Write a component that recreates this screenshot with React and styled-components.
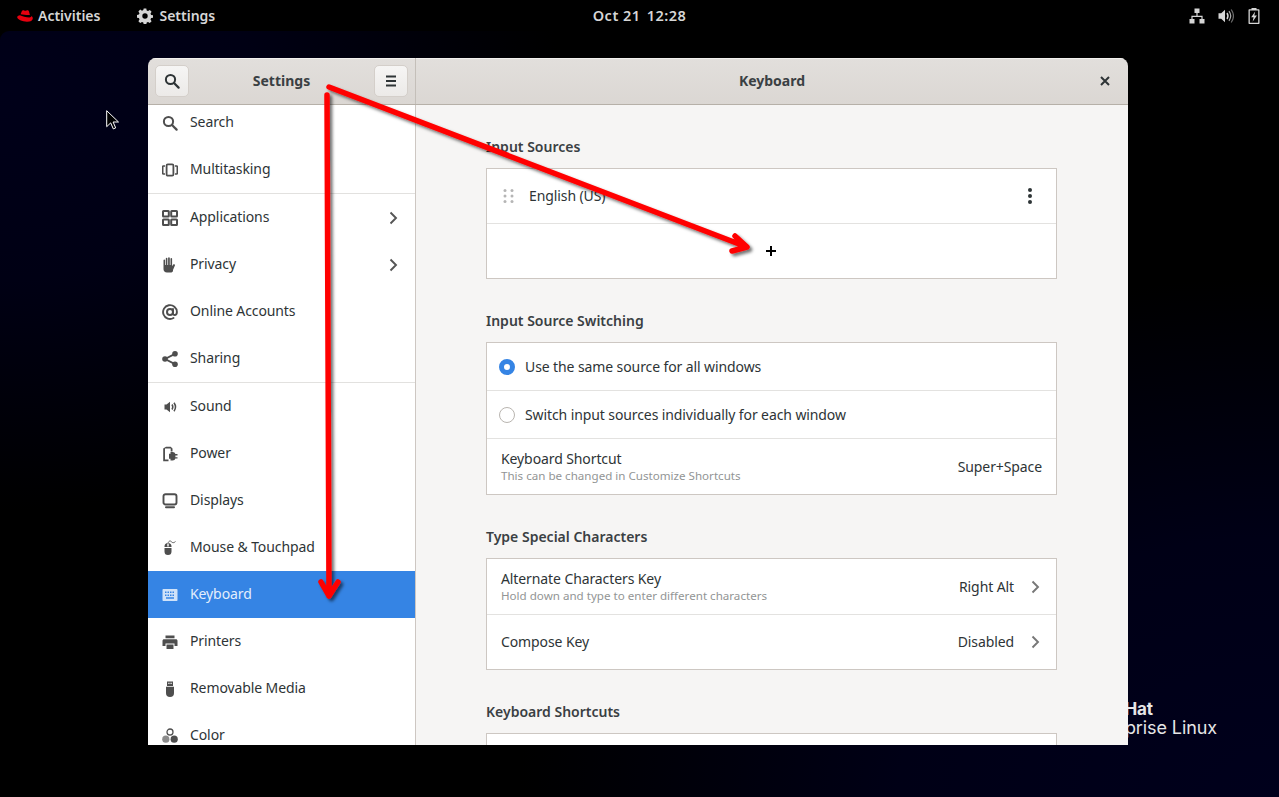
import React from 'react';
import styled, { createGlobalStyle } from 'styled-components';

const GlobalStyle = createGlobalStyle`
  html, body {
    margin: 0;
    padding: 0;
    background: #000;
    overflow: hidden;
  }
  * { box-sizing: border-box; }
`;

const Ink = ({ children, size = 16, vb = '0 0 16 16' }) => (
  <svg width={size} height={size} viewBox={vb} fill="currentColor" style={{ display: 'block' }}>
    {children}
  </svg>
);

const icons = {
  search: (
    <Ink>
      <circle cx="6.5" cy="6.5" r="4.6" fill="none" stroke="currentColor" strokeWidth="2" />
      <path d="M10 10l4.6 4.6" fill="none" stroke="currentColor" strokeWidth="2.2" strokeLinecap="round" />
    </Ink>
  ),
  multitasking: (
    <Ink>
      <rect x="4.6" y="2.4" width="6.8" height="11.2" rx="1.2" fill="none" stroke="currentColor" strokeWidth="1.8" />
      <path d="M3 4H1.300C.9 4 .7 4.300.7 4.600v6.800c0 .3.2.6.6.6H3M13 4h1.700c.4 0 .6.3.6.6v6.800c0 .3-.2.6-.6.6H13" fill="none" stroke="currentColor" strokeWidth="1.600" />
    </Ink>
  ),
  applications: (
    <Ink>
      <rect x="1" y="1" width="5.8" height="5.4" rx=".5" fill="none" stroke="currentColor" strokeWidth="2" />
      <rect x="9.2" y="1" width="5.8" height="5.4" rx=".5" fill="none" stroke="currentColor" strokeWidth="2" />
      <rect x="1" y="9.600" width="5.8" height="5.4" rx=".5" fill="none" stroke="currentColor" strokeWidth="2" />
      <rect x="9.2" y="9.600" width="5.8" height="5.4" rx=".5" fill="none" stroke="currentColor" strokeWidth="2" />
    </Ink>
  ),
  privacy: (
    <Ink>
      <path d="M1.500 3.200c0-1 1.600-1 1.600 0V8h.7V1.500c0-1 1.600-1 1.600 0V8h.7V.9c0-1 1.700-1 1.700 0V8h.7V1.700c0-1 1.600-1 1.600 0v7.500l1.100-1.600c.8-1 2.300-.2 1.700.8l-1.900 4.700C11.200 14.800 10 15.500 8.500 15.500H5c-2.200 0-3.500-1.300-3.500-3.200z" />
    </Ink>
  ),
  at: (
    <Ink>
      <circle cx="8" cy="8" r="3" fill="none" stroke="currentColor" strokeWidth="2" />
      <path d="M11 5v4.500c0 2.200 3.900 2.200 3.900-1.500A6.900 6.900 0 1 0 11.500 14" fill="none" stroke="currentColor" strokeWidth="1.900" strokeLinecap="round" />
    </Ink>
  ),
  sharing: (
    <Ink>
      <circle cx="3" cy="8" r="2.800" />
      <circle cx="13" cy="2.800" r="2.800" />
      <circle cx="13" cy="13.200" r="2.800" />
      <path d="M3 8l10-5.200M3 8l10 5.200" fill="none" stroke="currentColor" strokeWidth="1.900" />
    </Ink>
  ),
  sound: (
    <Ink>
      <path d="M2.500 5.500h2L8 2.700v10.600l-3.500-2.800h-2z" />
      <path d="M10 5.500c1 1.500 1 3.500 0 5M12 3.800c1.800 2.500 1.800 5.900 0 8.400" fill="none" stroke="currentColor" strokeWidth="1.500" />
    </Ink>
  ),
  power: (
    <Ink>
      <path d="M4 .8h4.700L10.500 2.500v3H8.700V2.600H3V13.500h3.500v1.800H1.200V2.500z" />
      <path d="M8.500 6h2.200a2.800 2.800 0 0 1 2.700 2.100h2.100v1.300h-2.100v1.800h2.100v1.300h-2.100a2.800 2.800 0 0 1-2.700 2.100H8.500v-1.800H7V7.800h1.500z" />
    </Ink>
  ),
  displays: (
    <Ink>
      <rect x="1.500" y="1.200" width="13" height="10.300" rx="2" fill="none" stroke="currentColor" strokeWidth="1.900" />
      <path d="M4 14.300h8" stroke="currentColor" strokeWidth="2" strokeLinecap="round" />
    </Ink>
  ),
  mouse: (
    <Ink>
      <path d="M2.500 6.500A3.500 3.500 0 0 1 6 3a3.500 3.500 0 0 1 3.500 3.500V7h-7zM2.500 8h7v3.500a3.500 3.500 0 0 1-7 0z" />
      <rect x="5.300" y="3.500" width="1.400" height="3" fill="#fff" />
      <path d="M6 3c1-2.400 2.500-2.400 3.500-1.200s2.500 1.200 4-.3" fill="none" stroke="currentColor" strokeWidth=".9" />
    </Ink>
  ),
  keyboard: (
    <Ink>
      <path fillRule="evenodd" d="M1.300 2h13.400c.5 0 .8.300.8.800v10.400c0 .5-.3.800-.8.800H1.300c-.5 0-.8-.3-.8-.8V2.800c0-.5.300-.8.800-.8zM3 4.500V6h1.500V4.500zm2.500 0V6H7V4.500zM8 4.500V6h1.500V4.500zm2.500 0V6H12V4.500zM3 7.500V9h1.500V7.500zm2.500 0V9H7V7.500zm2.500 0V9h1.500V7.500zm2.500 0V9H12V7.500zM4 10.200v1.500h8v-1.500z" />
    </Ink>
  ),
  printers: (
    <Ink>
      <path d="M3.500 1.500h9v2.700h-9zM2 5.200h12c.8 0 1.500.7 1.500 1.500V12h-3V9.500h-9V12h-3V6.700c0-.8.700-1.500 1.500-1.500z" />
      <path d="M4.500 10.500h7V15h-7z" />
    </Ink>
  ),
  usb: (
    <Ink>
      <path fillRule="evenodd" d="M5 .5h6v4.500H5zM6.300 1.800v1.300h1.200V1.800zm2.200 0v1.300h1.200V1.800z" />
      <path d="M4 5.700h8V12a4 4 0 0 1-8 0z" />
    </Ink>
  ),
  color: (
    <Ink>
      <circle cx="8" cy="4" r="3" fill="none" stroke="currentColor" strokeWidth="1.300" />
      <circle cx="3.800" cy="11.200" r="3.600" opacity=".65" />
      <circle cx="12.200" cy="11.200" r="3.600" />
    </Ink>
  ),
  chevron: (
    <Ink>
      <path d="M5.500 2.500L11 8l-5.500 5.500" fill="none" stroke="currentColor" strokeWidth="1.900" />
    </Ink>
  ),
  menu: (
    <Ink>
      <path d="M3 3.500h10M3 8h10M3 12.500h10" stroke="currentColor" strokeWidth="1.900" />
    </Ink>
  ),
  close: (
    <Ink>
      <path d="M4 4l8 8M12 4l-8 8" stroke="currentColor" strokeWidth="2" />
    </Ink>
  ),
  dots: (
    <Ink>
      <circle cx="8" cy="2" r="2" />
      <circle cx="8" cy="8" r="2" />
      <circle cx="8" cy="14" r="2" />
    </Ink>
  ),
  grip: (
    <Ink>
      <circle cx="4" cy="2.500" r="1.500" />
      <circle cx="11" cy="2.500" r="1.500" />
      <circle cx="4" cy="8" r="1.500" />
      <circle cx="11" cy="8" r="1.500" />
      <circle cx="4" cy="13.500" r="1.500" />
      <circle cx="11" cy="13.500" r="1.500" />
    </Ink>
  ),
  plus: (
    <Ink>
      <path d="M8 3v10M3 8h10" stroke="currentColor" strokeWidth="2" />
    </Ink>
  ),
  gear: (
    <Ink>
      <path fillRule="evenodd" d="M6.700.5h2.600l.4 2 1.300.6 1.800-1.100 1.800 1.800-1.100 1.800.6 1.300 2 .4v2.400l-2 .4-.6 1.300 1.100 1.800-1.800 1.800-1.800-1.100-1.300.6-.4 2H6.700l-.4-2-1.300-.6-1.800 1.100-1.800-1.800 1.100-1.800-.6-1.300-2-.4V6.900l2-.4.6-1.300-1.100-1.800L3.200 1.600 5 2.700l1.300-.6zM8 5.300a2.700 2.700 0 1 0 0 5.400 2.700 2.700 0 0 0 0-5.400z" />
    </Ink>
  ),
  redhat: (
    <Ink vb="0 0 16 12">
      <path d="M3.600 4.300L4.800 1.200C5.200.3 6.200.100 7.200.500c.9.300 1.500.3 2.300 0 1.200-.4 2.200 0 2.500 1.100l.9 3.500C9.500 5.200 6 4.800 3.600 4.300z" />
      <path d="M3 5.300c-1.700.3-2.800 1-2.800 2 0 2 5 4.400 9.800 4.400 3.500 0 5.800-1.300 5.800-3.300 0-.9-.5-1.700-1.500-2.300.2.800-.5 1.300-2 1.300C9.300 7.400 5 6.500 3 5.300z" />
    </Ink>
  ),
  network: (
    <Ink>
      <path d="M5.500.5h5v4.500h-5zM.5 11h5v4.500h-5zM10.500 11h5v4.500h-5z" />
      <path d="M8 5v3M3 11V8.300h10V11" fill="none" stroke="currentColor" strokeWidth="1.200" />
    </Ink>
  ),
  volume: (
    <Ink>
      <path d="M.5 5.200h2.700L7 1.800v12.400l-3.800-3.400H.5z" />
      <path d="M9 5c1.200 1.800 1.200 4.200 0 6" fill="none" stroke="currentColor" strokeWidth="1.400" />
      <path d="M11 3.200c2 2.800 2 6.800 0 9.600" fill="none" stroke="currentColor" strokeWidth="1.200" opacity=".8" />
      <path d="M13.200 1.500c2.800 4 2.800 9 0 13" fill="none" stroke="currentColor" strokeWidth="1.200" opacity=".5" />
    </Ink>
  ),
  battery: (
    <Ink>
      <path fillRule="evenodd" d="M5.500 0h5v1.200h2.300c.4 0 .7.300.7.700v13.400c0 .4-.3.700-.7.700H3.200c-.4 0-.7-.3-.7-.7V1.900c0-.4.300-.7.700-.7h2.300zM3.800 2.500v12.200h8.400V2.500z" />
      <path d="M9.200 3.500L5.200 9.200h2.400L6.600 13.800 10.900 7.600H8.300z" />
    </Ink>
  ),
};

const sideItems = [
  { icon: 'search', label: 'Search' },
  { icon: 'multitasking', label: 'Multitasking', split: true },
  { icon: 'applications', label: 'Applications', more: true },
  { icon: 'privacy', label: 'Privacy', more: true },
  { icon: 'at', label: 'Online Accounts' },
  { icon: 'sharing', label: 'Sharing', split: true },
  { icon: 'sound', label: 'Sound' },
  { icon: 'power', label: 'Power' },
  { icon: 'displays', label: 'Displays' },
  { icon: 'mouse', label: 'Mouse & Touchpad' },
  { icon: 'keyboard', label: 'Keyboard', active: true },
  { icon: 'printers', label: 'Printers' },
  { icon: 'usb', label: 'Removable Media' },
  { icon: 'color', label: 'Color' },
];

const UI_FONT = `"Noto Sans", "Open Sans", "Liberation Sans", sans-serif`;

const Screen = styled.div`
  width: 1279px;
  height: 797px;
  display: flex;
  flex-direction: column;
  background: #000;
  font-family: ${UI_FONT};
  font-size: 14px;
  letter-spacing: -0.1px;
  overflow: hidden;
`;

const TopBar = styled.header`
  height: 31px;
  flex: none;
  display: grid;
  grid-template-columns: 1fr auto 1fr;
  align-items: center;
  color: #d6d6d6;
  font-weight: 600;
  font-size: 14px;
  letter-spacing: 0;
`;

const TopLeft = styled.div`
  display: flex;
  align-items: center;
  padding-left: 17px;
`;

const LogoMark = styled.span`
  color: #e5000f;
  margin-right: 5px;
`;

const AppMenu = styled.span`
  display: flex;
  align-items: center;
  gap: 6px;
  margin-left: 37px;
`;

const TopRight = styled.div`
  display: flex;
  justify-content: flex-end;
  align-items: center;
  gap: 12.5px;
  padding-right: 17px;
`;

const Clock = styled.span`
  display: flex;
  gap: 6px;
  padding-bottom: 1px;
  font-size: 14.5px;
  letter-spacing: 0.5px;
`;

const Desktop = styled.main`
  flex: 1;
  position: relative;
  border-radius: 9px 9px 0 0;
  overflow: hidden;
  background:
    radial-gradient(ellipse 560px 420px at 0 60px, #000019 0%, #000014 45%, rgba(0, 0, 16, 0) 100%),
    radial-gradient(ellipse 760px 520px at 100% 100%, #00001c 0%, #000016 50%, rgba(0, 0, 20, 0) 100%),
    #000;
`;

const Branding = styled.div`
  position: absolute;
  left: 1000px;
  width: 217px;
  top: 669px;
  color: #e6e6e6;
  font-family: Inter, "Open Sans", sans-serif;
  text-align: right;
  white-space: nowrap;
`;

const BrandTop = styled.div`
  font-size: 17px;
  font-weight: 700;
  line-height: 18px;
  text-align: left;
  padding-left: 89px;
`;

const BrandBottom = styled.div`
  font-size: 18px;
  line-height: 20px;
  font-weight: 400;
`;

const Window = styled.section`
  position: absolute;
  left: 148px;
  top: 27px;
  width: 980px;
  height: 687px;
  display: flex;
  flex-direction: column;
  border-radius: 8px 8px 0 0;
  overflow: hidden;
  color: #2e3436;
`;

const TitleBar = styled.div`
  height: 47px;
  flex: none;
  display: flex;
  background: linear-gradient(#e2dfdc, #dbd7d3);
  box-shadow: inset 0 1px 0 #f2f0ee;
  border-bottom: 1px solid #b6b0a8;
`;

const SideHeader = styled.div`
  width: 268px;
  flex: none;
  display: flex;
  align-items: center;
  justify-content: space-between;
  padding: 0 7px;
  border-right: 1px solid #c4bfb9;
`;

const MainHeader = styled.div`
  flex: 1;
  display: flex;
  align-items: center;
  justify-content: center;
  position: relative;
`;

const Title = styled.span`
  font-weight: 700;
  font-size: 14px;
  letter-spacing: 0;
  padding-bottom: 2px;
  color: #3a4043;
`;

const HeadButton = styled.button`
  width: 34px;
  height: 32px;
  padding: 0;
  display: flex;
  align-items: center;
  justify-content: center;
  color: #2e3436;
  background: linear-gradient(#f6f5f4, #eceae8);
  border: 1px solid #d4cfca;
  border-radius: 5px;
`;

const CloseBox = styled.span`
  position: absolute;
  right: 15px;
  top: 15px;
  color: #2e3436;
`;

const Body = styled.div`
  flex: 1;
  min-height: 0;
  display: flex;
`;

const Sidebar = styled.nav`
  width: 268px;
  flex: none;
  background: #fff;
  border-right: 1px solid #cdc7c2;
  overflow: hidden;
`;

const SideList = styled.div`
  margin-top: -6px;
`;

const SideRow = styled.div`
  height: ${(p) => (p.$split ? 48 : 47)}px;
  display: flex;
  align-items: center;
  gap: 12px;
  padding: 0 14px;
  background: ${(p) => (p.$active ? '#3584e4' : 'transparent')};
  color: ${(p) => (p.$active ? '#e3eefc' : '#2e3436')};
  border-bottom: ${(p) => (p.$split ? '1px solid #e2e1df' : 'none')};
`;

const SideIcon = styled.span`
  flex: none;
  color: ${(p) => (p.$active ? '#cfe2f9' : '#4e4e4e')};
`;

const SideLabel = styled.span`
  flex: 1;
  line-height: 20px;
  padding-bottom: 1px;
`;

const Chevron = styled.span`
  flex: none;
  color: ${(p) => p.$tone || '#555'};
  margin-left: ${(p) => p.$gap || 0}px;
  margin-right: ${(p) => p.$pull || 0}px;
`;

const Content = styled.div`
  flex: 1;
  min-width: 0;
  background: #f6f5f4;
  padding: 31px 0 0 70px;
  overflow: hidden;
`;

const Section = styled.section`
  width: 571px;
  margin-bottom: 31px;
`;

const SectionTitle = styled.h2`
  margin: 0 0 12px;
  padding-top: 1px;
  height: 20px;
  font-size: 14px;
  line-height: 20px;
  font-weight: 600;
  letter-spacing: 0;
  color: #3a4043;
`;

const Frame = styled.div`
  background: #fff;
  border: 1px solid #cdc7c2;
`;

const Row = styled.div`
  height: ${(p) => p.$h}px;
  display: flex;
  align-items: center;
  justify-content: ${(p) => (p.$center ? 'center' : 'flex-start')};
  padding: 0 14px;
  border-top: ${(p) => (p.$line ? '1px solid #e3e2e0' : 'none')};
`;

const Grip = styled.span`
  color: #b5b5b5;
  margin-right: 12px;
`;

const RowText = styled.div`
  flex: 1;
  display: flex;
  flex-direction: column;
`;

const RowStack = styled(RowText)`
  padding-top: 1px;
`;

const RowTitle = styled.span`
  line-height: 18px;
  padding-bottom: ${(p) => (p.$flush ? 0 : 1)}px;
`;

const RowHint = styled.span`
  font-size: 11.6px;
  letter-spacing: 0;
  line-height: 16px;
  color: #929595;
`;

const RowValue = styled.span`
  flex: none;
  padding-bottom: 1px;
`;

const MoreDots = styled.span`
  color: #2e3436;
  margin-right: 4px;
`;

const PlusIcon = styled.span`
  color: #000;
  margin-right: 1px;
`;

const RadioMark = styled.span`
  width: 16px;
  height: 16px;
  flex: none;
  margin: 0 10px 0 -2px;
  border-radius: 50%;
  background: #fff;
  border: ${(p) => (p.$on ? '5px solid #3584e4' : '1px solid #b9b5b0')};
`;

const RadioLabel = styled.span`
  line-height: 18px;
  padding-top: 1px;
`;

const Annotation = styled.svg`
  position: absolute;
  left: 0;
  top: 0;
  width: 1279px;
  height: 766px;
  pointer-events: none;
`;

const Pointer = styled.svg`
  position: absolute;
  left: 106px;
  top: 79px;
`;

const Side = ({ icon, label, more, split, active }) => (
  <SideRow $split={split} $active={active}>
    <SideIcon $active={active}>{icons[icon]}</SideIcon>
    <SideLabel>{label}</SideLabel>
    {more && <Chevron>{icons.chevron}</Chevron>}
  </SideRow>
);

const App = () => (
  <>
    <GlobalStyle />
    <Screen>
      <TopBar>
        <TopLeft>
          <LogoMark>{icons.redhat}</LogoMark>
          <span>Activities</span>
          <AppMenu>
            {icons.gear}
            <span>Settings</span>
          </AppMenu>
        </TopLeft>
        <Clock>
          <span>Oct 21</span>
          <span>12:28</span>
        </Clock>
        <TopRight>
          {icons.network}
          {icons.volume}
          {icons.battery}
        </TopRight>
      </TopBar>
      <Desktop>
        <Branding>
          <BrandTop>Red Hat</BrandTop>
          <BrandBottom>Enterprise Linux</BrandBottom>
        </Branding>
        <Pointer width="14" height="20" viewBox="0 0 14 20">
          <path d="M.700.700v16l4-3.800 2.600 6 2.400-1-2.600-5.900h5.400z" fill="#000" stroke="#fff" strokeWidth="1" />
        </Pointer>
        <Window>
          <TitleBar>
            <SideHeader>
              <HeadButton>{icons.search}</HeadButton>
              <Title>Settings</Title>
              <HeadButton>{icons.menu}</HeadButton>
            </SideHeader>
            <MainHeader>
              <Title>Keyboard</Title>
              <CloseBox>{icons.close}</CloseBox>
            </MainHeader>
          </TitleBar>
          <Body>
            <Sidebar>
              <SideList>
                {sideItems.map((item) => (
                  <Side key={item.label} {...item} />
                ))}
              </SideList>
            </Sidebar>
            <Content>
              <Section>
                <SectionTitle>Input Sources</SectionTitle>
                <Frame>
                  <Row $h={54}>
                    <Grip>{icons.grip}</Grip>
                    <RowText>
                      <RowTitle>English (US)</RowTitle>
                    </RowText>
                    <MoreDots>{icons.dots}</MoreDots>
                  </Row>
                  <Row $h={55} $line $center>
                    <PlusIcon>{icons.plus}</PlusIcon>
                  </Row>
                </Frame>
              </Section>
              <Section>
                <SectionTitle>Input Source Switching</SectionTitle>
                <Frame>
                  <Row $h={47}>
                    <RadioMark $on />
                    <RadioLabel>Use the same source for all windows</RadioLabel>
                  </Row>
                  <Row $h={48} $line>
                    <RadioMark />
                    <RadioLabel>Switch input sources individually for each window</RadioLabel>
                  </Row>
                  <Row $h={56} $line>
                    <RowStack>
                      <RowTitle $flush>Keyboard Shortcut</RowTitle>
                      <RowHint>This can be changed in Customize Shortcuts</RowHint>
                    </RowStack>
                    <RowValue>Super+Space</RowValue>
                  </Row>
                </Frame>
              </Section>
              <Section>
                <SectionTitle>Type Special Characters</SectionTitle>
                <Frame>
                  <Row $h={55}>
                    <RowStack>
                      <RowTitle $flush>Alternate Characters Key</RowTitle>
                      <RowHint>Hold down and type to enter different characters</RowHint>
                    </RowStack>
                    <RowValue>Right Alt</RowValue>
                    <Chevron $tone="#777" $gap={13} $pull={-1}>{icons.chevron}</Chevron>
                  </Row>
                  <Row $h={55} $line>
                    <RowText>
                      <RowTitle>Compose Key</RowTitle>
                    </RowText>
                    <RowValue>Disabled</RowValue>
                    <Chevron $tone="#777" $gap={13} $pull={-1}>{icons.chevron}</Chevron>
                  </Row>
                </Frame>
              </Section>
              <Section>
                <SectionTitle>Keyboard Shortcuts</SectionTitle>
                <Frame>
                  <Row $h={54} />
                </Frame>
              </Section>
            </Content>
          </Body>
        </Window>
        <Annotation viewBox="0 31 1279 766">
          <defs>
            <filter id="arrowShadow" x="0" y="0" width="1279" height="797" filterUnits="userSpaceOnUse">
              <feDropShadow dx="2.500" dy="2.500" stdDeviation="1.500" floodColor="#000" floodOpacity=".55" />
            </filter>
          </defs>
          <g filter="url(#arrowShadow)" fill="none" stroke="#f00" strokeWidth="5.500" strokeLinecap="round" strokeLinejoin="round">
            <path d="M329 87L747 247M735 236L747 247L732 251" />
            <path d="M327 95L329 596M321 582L329 596L338 582" />
          </g>
        </Annotation>
      </Desktop>
    </Screen>
  </>
);

export default App;
